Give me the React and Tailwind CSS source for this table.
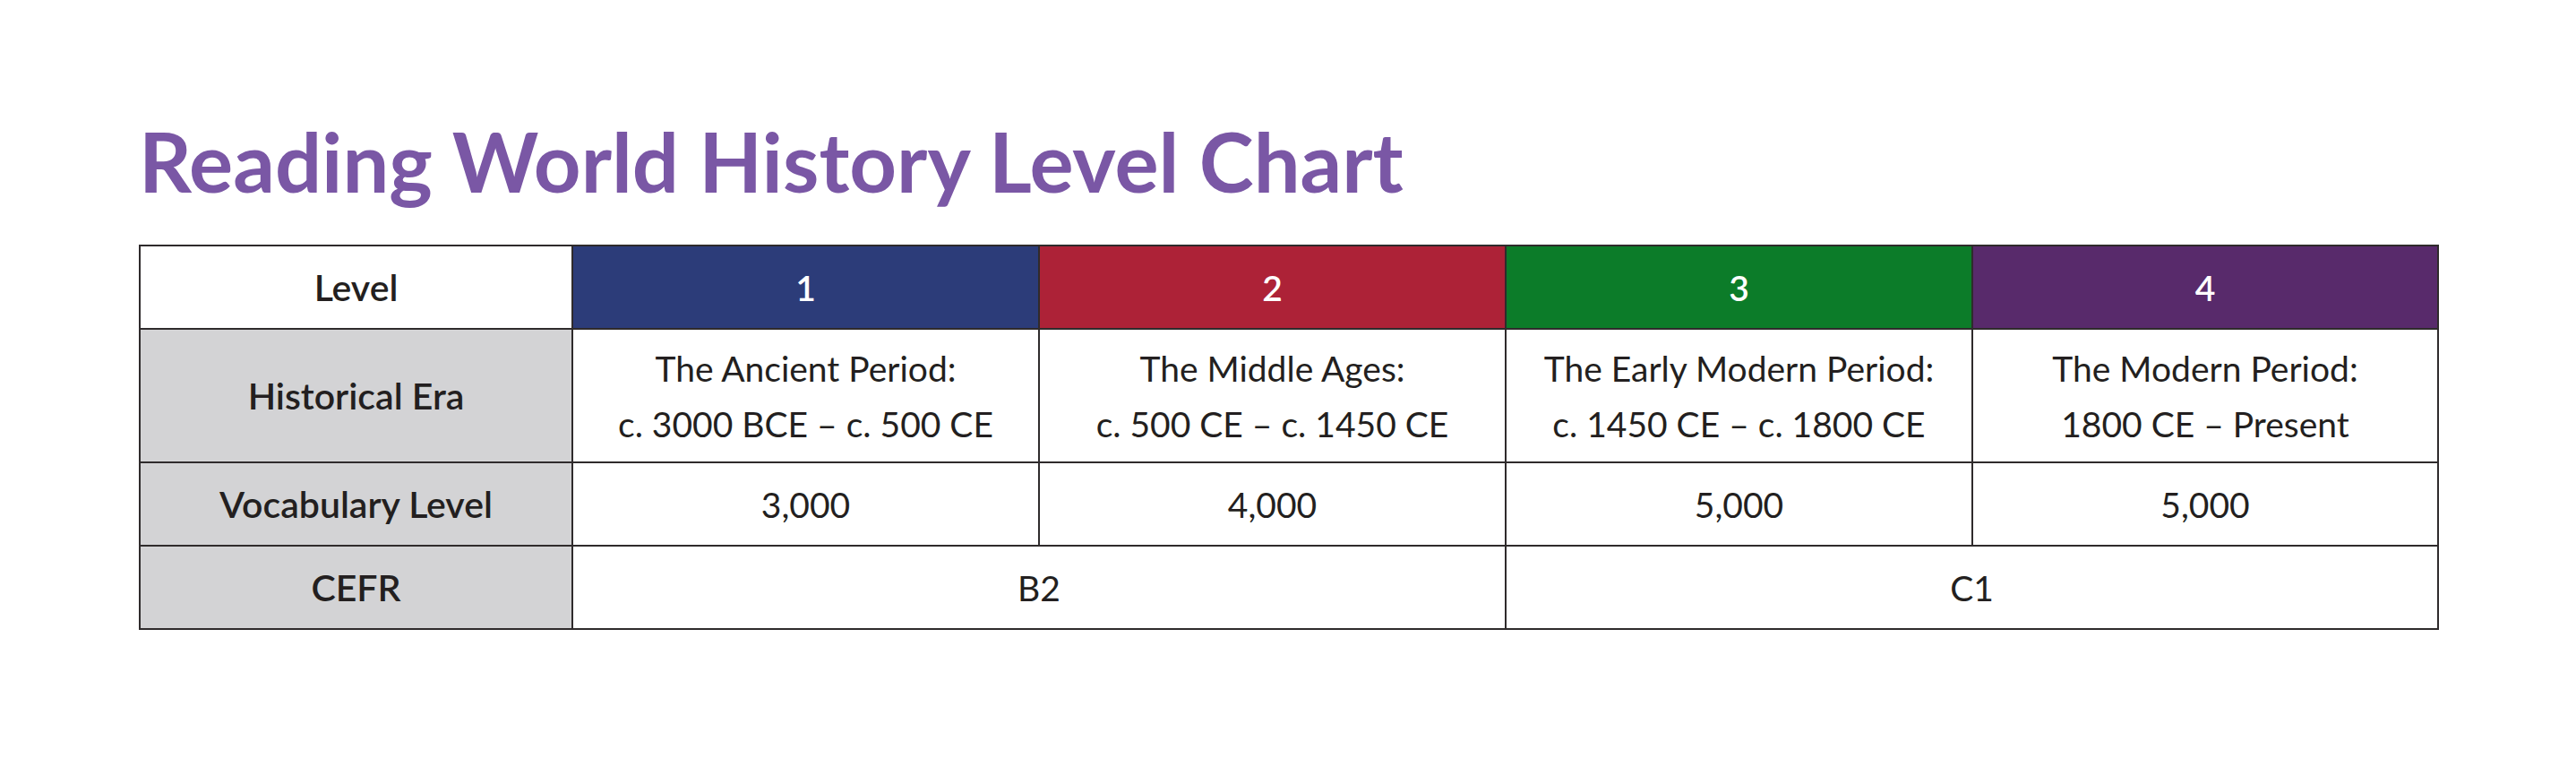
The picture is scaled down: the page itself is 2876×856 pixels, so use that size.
const levels = [
  { n: "1", bg: "bg-[#2c3c79]", era: ["The Ancient Period:", "c. 3000 BCE – c. 500 CE"], vocab: "3,000" },
  { n: "2", bg: "bg-[#ad2237]", era: ["The Middle Ages:", "c. 500 CE – c. 1450 CE"], vocab: "4,000" },
  { n: "3", bg: "bg-[#0c7c29]", era: ["The Early Modern Period:", "c. 1450 CE – c. 1800 CE"], vocab: "5,000" },
  { n: "4", bg: "bg-[#582a6b]", era: ["The Modern Period:", "1800 CE – Present"], vocab: "5,000" },
];

const cell = "border-2 border-[#2f2b2c] text-center align-middle p-0";
const label = `${cell} bg-[#d3d3d5] font-semibold text-[41px]`;

export default function App() {
  return (
    <div className="w-[2876px] h-[856px] bg-white pl-[155px] pt-[134px] font-['Lato',sans-serif] text-[#231f20]">
      <h1 className="text-[92px] leading-[92px] font-bold text-[#7a57a5] tracking-[0px]">
        Reading World History Level Chart
      </h1>
      <table className="mt-[47px] table-fixed border-collapse w-[2566px] text-[39px] leading-[62px]">
        <colgroup>
          <col className="w-[483px]" />
          <col className="w-[521px]" />
          <col className="w-[521px]" />
          <col className="w-[521px]" />
          <col className="w-[520px]" />
        </colgroup>
        <tbody>
          <tr className="h-[93px]">
            <td className={`${cell} bg-white font-semibold text-[41px]`}>Level</td>
            {levels.map((l) => (
              <td key={l.n} className={`${cell} ${l.bg} text-white font-semibold`}>
                {l.n}
              </td>
            ))}
          </tr>
          <tr className="h-[149px]">
            <td className={label}>Historical Era</td>
            {levels.map((l) => (
              <td key={l.n} className={cell}>
                <div>{l.era[0]}</div>
                <div>{l.era[1]}</div>
              </td>
            ))}
          </tr>
          <tr className="h-[93px]">
            <td className={label}>Vocabulary Level</td>
            {levels.map((l) => (
              <td key={l.n} className={cell}>
                {l.vocab}
              </td>
            ))}
          </tr>
          <tr className="h-[93px]">
            <td className={label}>CEFR</td>
            <td colSpan={2} className={cell}>B2</td>
            <td colSpan={2} className={cell}>C1</td>
          </tr>
        </tbody>
      </table>
    </div>
  );
}
